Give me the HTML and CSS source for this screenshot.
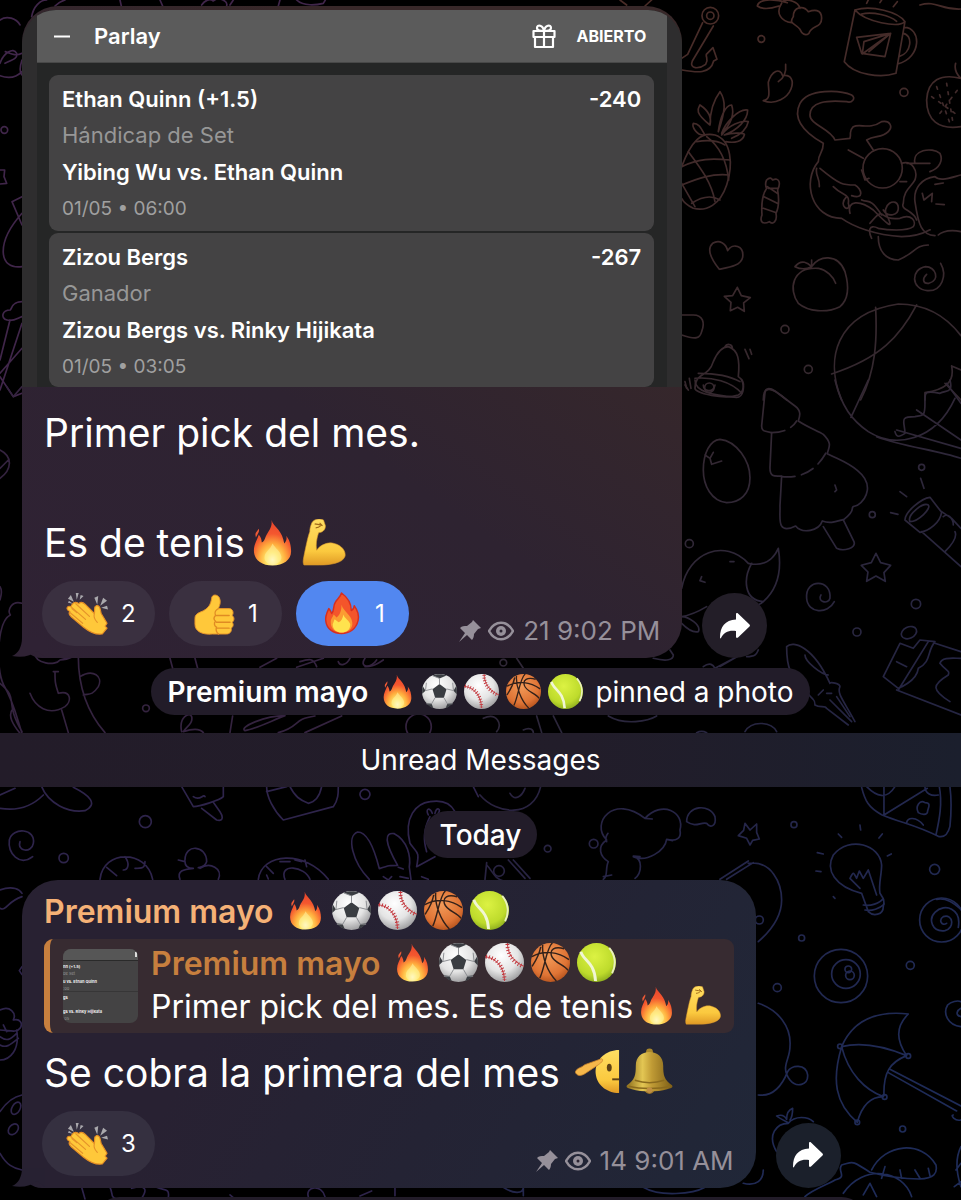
FILE: index.html
```html
<!DOCTYPE html>
<html lang="es">
<head>
    <meta charset="UTF-8">
    <meta name="viewport" content="width=device-width, initial-scale=1.0">
    <title>Premium mayo</title>
    <link rel="stylesheet" href="styles.css">
</head>
<body>
    <!-- shared emoji and icons -->
    <svg class="sprite" aria-hidden="true">
        <defs>
            <radialGradient id="gFire" cx="50%" cy="88%" r="85%">
                <stop offset="0" stop-color="#fffde6"/>
                <stop offset=".2" stop-color="#ffe667"/>
                <stop offset=".42" stop-color="#ffab3d"/>
                <stop offset=".68" stop-color="#f4572f"/>
                <stop offset="1" stop-color="#e8452c"/>
            </radialGradient>
            <radialGradient id="gWhite" cx="42%" cy="32%" r="70%">
                <stop offset="0" stop-color="#ffffff"/>
                <stop offset=".6" stop-color="#e4e4e4"/>
                <stop offset="1" stop-color="#9d9d9f"/>
            </radialGradient>
            <radialGradient id="gBasket" cx="45%" cy="35%" r="68%">
                <stop offset="0" stop-color="#f29a58"/>
                <stop offset=".7" stop-color="#df7435"/>
                <stop offset="1" stop-color="#b4521d"/>
            </radialGradient>
            <radialGradient id="gTennis" cx="45%" cy="35%" r="68%">
                <stop offset="0" stop-color="#dcf243"/>
                <stop offset=".7" stop-color="#bedb2c"/>
                <stop offset="1" stop-color="#8bab1e"/>
            </radialGradient>
            <linearGradient id="gSkin" x1="0" y1="0" x2="0" y2="1">
                <stop offset="0" stop-color="#ffdf63"/>
                <stop offset=".7" stop-color="#fbc93f"/>
                <stop offset="1" stop-color="#e09a25"/>
            </linearGradient>
            <linearGradient id="gBell" x1="0" x2="1">
                <stop offset="0" stop-color="#8d6d1c"/>
                <stop offset=".35" stop-color="#e3c653"/>
                <stop offset=".55" stop-color="#c09b35"/>
                <stop offset="1" stop-color="#7d5e16"/>
            </linearGradient>
        </defs>

        <symbol id="fire" viewBox="0 0 48 48">
            <path fill="url(#gFire)" d="M23 1c1 4 4 6 7 10 3 4 5 8 6 14 2-2 3-5 2-8 4 5 5 11 5 16 0 9-8 14.500-19 14.500S5 42 5 32c0-6 3-10 5-16 2 2 3 5 3 8 2-1 3-3 4-6 3-6 7-9 6-17z"/>
            <path fill="#ef5a35" d="M10 10c1 3-1 5-3 9 0-2-1-3 0-5z"/>
            <path fill="#fff3a0" opacity=".55" d="M24 25c3 5 8 8 9 13 1 5-4 8-9 8s-9-3-8-8c0-4 6-7 8-13z"/>
        </symbol>
        <symbol id="fire-flat" viewBox="0 0 44 44">
            <path fill="#f4552b" stroke="#d62f20" stroke-width="1.500" stroke-linejoin="round" d="M22 1c7 5 10 12 10 18 2-1 3-3 3-5 3 4 5 10 4 15-2 9-9 13.500-17 13.500S7 38 6 30c-1-5 1-9 3-13 1 1 2 3 3 5 3-3 1-8 4-12 2-3 5-5 6-9z"/>
            <path fill="#fb9b32" d="M22 13c2 7 10 10 11 18 1 7-5 10.500-11 10.500S11 38 11 31c0-4 2-5 3-8l3 3c4-3 5-8 5-13z"/>
            <path fill="#ffe34e" d="M24 23c1 4 6 6 7 10 0 6-4 8.500-9 8.500s-9-3-9-8.500c1-2 1-3 2-5l4 3c3-1 4-4 5-8z"/>
        </symbol>
        <symbol id="arm" viewBox="0 0 48 48">
            <path fill="url(#gSkin)" stroke="#d9982b" stroke-width=".6" d="M12 4c2-4 8-5 12-3l2 6c0 5-4 7-7 7-2 6-3 12-2 18 4-6 12-9 18-7 8 2 12 8 11 13-2 7-15 9-26 9H4c-1-2-1-4 0-9 2-10 4-20 6-25 0-4 1-6 2-9z"/>
            <path fill="none" stroke="#a06a1a" stroke-width="1.200" d="M15 5c3 1 5 0 8 2M16 9c2 0 4-1 5-2M20 4l3 3"/>
        </symbol>
        <symbol id="clap" viewBox="0 0 44 44">
            <path fill="#a9a8ac" d="M2 7l6 3-3-7zM10 1l1 7 2-7zM2 11l5 1-4-3zM29 6l3 7 1-9zM38 6l-3 8 7-5zM36 16l7 2-1-4zM15 3l-1 5 4-4z"/>
            <path fill="#ffc83a" stroke="#e58e24" stroke-width="1.200" stroke-linejoin="round" d="M1 17c0-2 2-3 4-2l1-2c2-3 5-3 7-1 2-2 5-1 7 1l9 9c1-4-1-7 2-8 4-1 4 4 5 8l6 10-2 3 2 2-5 6c-7 1-14-3-19-7L5 25c-2-2-2-4-1-5-2-1-3-2-3-3z"/>
            <path fill="none" stroke="#e5932a" stroke-width="1.200" stroke-linecap="round" d="M5 15l15 13M10 12l14 13M4 21l13 11M29 22c-1 4 0 6 3 9M6 17l5 4"/>
        </symbol>
        <symbol id="thumb" viewBox="0 0 44 44">
            <path fill="#ffc83a" stroke="#e5932a" stroke-width="1" stroke-linejoin="round" d="M2 27c0-5 5-6 9-8 5-3 7-6 8-12 0-5 6-5 8-1 2 5 0 8-1 11h11c4 0 5 5 3 7 3 2 2 6 0 7 2 2 1 5-1 6 1 3-1 6-5 6H20C9 44 2 40 2 33z"/>
            <path fill="none" stroke="#e08b23" stroke-width="1.400" stroke-linecap="round" d="M26 17c-4 2-4 4-3 7-2 2-2 4 0 6-2 2-1 5 1 6-1 3 0 5 2 7M24 24h13M24 31h14M25 37h12"/>
        </symbol>
        <symbol id="soccer" viewBox="0 0 40 40">
            <circle cx="20" cy="20" r="20" fill="url(#gWhite)"/>
            <path fill="#3a3d42" d="M20 11.500l8 6-3 9.500h-10l-3-9.500zM12 1.700c4-2 12-2 16 0L20 5zM1 14l3 5-3.800 3.500C0 19 .2 16 1 14zM39 14c1 2 1 6 .8 9L36 19zM5 33l6 1 2 5c-3-1-6-3-8-6zM35 33l-6 1-2 5c3-1 6-3 8-6z"/>
            <path fill="none" stroke="#8b8d91" stroke-width="1" d="M20 5v7M20 5l-8-3M12 17l-8 2M28 17l8 2M15 27l-4 7M25 27l4 7M4 19l1-9M36 19l-1-9M11 34H5M29 34h6"/>
        </symbol>
        <symbol id="baseball" viewBox="0 0 40 40">
            <circle cx="20" cy="20" r="20" fill="url(#gWhite)"/>
            <path fill="none" stroke="#c3363c" stroke-width="1" d="M0 14c11 1 20 11 20 25M23 0c0 11 6 19 17 24"/>
            <path fill="none" stroke="#c3363c" stroke-width="4" stroke-dasharray="1 2" d="M1 14c11 1 19 11 19 24M23 1c0 11 6 19 16 23"/>
        </symbol>
        <symbol id="basketball" viewBox="0 0 40 40">
            <circle cx="20" cy="20" r="20" fill="url(#gBasket)"/>
            <path fill="none" stroke="#32211a" stroke-width="1.500" d="M1 14c12-7 27-5 38 3M12 2c-1 12 5 28 14 37M22 0c-6 4-8 26-13 36M34 6c-10-3-15 1-13 7 2 7 13 9 17 15M1 24c4-6 7-10 9-20"/>
        </symbol>
        <symbol id="tennis" viewBox="0 0 40 40">
            <circle cx="20" cy="20" r="20" fill="url(#gTennis)"/>
            <path fill="none" stroke="#f1f6d4" stroke-width="3" d="M4 9c2 9 14 10 15 30"/>
            <path fill="none" stroke="#e9f0bd" stroke-width="2" d="M33 5c7 8 7 18 3 26"/>
        </symbol>
        <symbol id="salute" viewBox="0 0 48 48">
            <path fill="url(#gSkin)" d="M45 2v44c-13 0-24-9-24-22S32 2 45 2z"/>
            <ellipse cx="35" cy="20" rx="2.500" ry="4" fill="#5d4216"/>
            <path stroke="#5d4216" stroke-width="2" d="M38 32h7"/>
            <path fill="#f6b74a" stroke="#c9832b" stroke-width=".8" d="M1 23c2-3 6-3 9-6l17-6c3 1 0 4-3 6l-12 8c-4 3-8 4-10 2s-2-2-1-4z"/>
        </symbol>
        <symbol id="bell" viewBox="0 0 48 48">
            <circle cx="24" cy="4" r="3.500" fill="#a9872c"/>
            <circle cx="24" cy="42" r="5" fill="#9b7428"/>
            <path fill="url(#gBell)" d="M24 4c8 0 14 5 14 14 0 10 1 14 9 20 2 3-3 3-5 4-10 3-26 3-36 0-2-1-7-1-5-4 8-6 9-10 9-20 0-9 6-14 14-14z"/>
            <path fill="none" stroke="#8a6a1e" stroke-width="1.500" d="M9 33c9 3 21 3 30 0M3 39c12 3 30 3 42 0"/>
            <circle cx="24" cy="43" r="3" fill="#c08f44"/>
        </symbol>
        <symbol id="pin" viewBox="0 0 22 22">
            <path fill="currentColor" d="M14 0l8 8-3 1-4 5c0 3-1 5-2 6l-5-5-8 7 6-9-5-5c2-2 4-2 7-2l5-4z"/>
        </symbol>
        <symbol id="eye" viewBox="0 0 26 20">
            <path fill="none" stroke="currentColor" stroke-width="2.500" d="M1 10C7-1 19-1 25 10 19 21 7 21 1 10z"/>
            <circle cx="13" cy="10" r="5" fill="currentColor"/>
            <circle cx="13" cy="10" r="1.500" fill="#2b2331"/>
        </symbol>
        <symbol id="share" viewBox="0 0 30 26">
            <path fill="currentColor" d="M16 1.500c0-1.500 1-1.800 2-1l11.500 11c.6.700.6 1.300 0 2L18 24.500c-1 .8-2 .5-2-1V18C9 17 4 19 1 25c-.5.800-1 .5-1-.5C0 14 5 7 16 6.500z"/>
        </symbol>
        <symbol id="tail" viewBox="0 0 36 20">
            <path fill="currentColor" d="M10 0c0 9-4 16-10 18 10 2 19 0 25-5l8 6V0z"/>
        </symbol>
    </svg>

    <main class="chat">
        <svg class="wallpaper" viewBox="0 0 961 1200" preserveAspectRatio="xMidYMin slice" aria-hidden="true">
            <defs>
                <linearGradient id="wTop" gradientUnits="userSpaceOnUse" x1="500" y1="0" x2="900" y2="1200">
                    <stop offset="0" stop-color="#4a2c27"/>
                    <stop offset="1" stop-color="#34282f"/>
                </linearGradient>
                <linearGradient id="wMid" gradientUnits="userSpaceOnUse" x1="500" y1="0" x2="1100" y2="1000">
                    <stop offset="0" stop-color="#38292d"/>
                    <stop offset="1" stop-color="#252543"/>
                </linearGradient>
                <linearGradient id="wLow" gradientUnits="userSpaceOnUse" x1="100" y1="0" x2="1300" y2="1000">
                    <stop offset="0" stop-color="#29223f"/>
                    <stop offset="1" stop-color="#1e2b58"/>
                </linearGradient>
            </defs>
            <!-- top left -->
            <g transform="scale(.3333)" stroke="#40264a">
                <path d="M0 60c20-15 50-5 60 15M0 190c10-30 40-50 50-30 5 15-15 20-35 30M66 160c-20 10-35 0-50-5M66 215c-20 20-45 20-66 12M66 180c-10 30-5 40 0 45"/>
                <circle cx="13" cy="390" r="10"/>
                <path d="M0 510l14 0 -2 20 8 20-20 2M66 590l-30 15 30 70M66 640c-80 90-70 170 0 160M66 905c-30 0-30 20-35 25-25 0-30 25-10 30 20 5 30-5 45-10M30 960L0 1080M66 970L0 1170M66 1045L0 1120M0 1130l40 60 26-10"/>
                <path d="M95 50C100 20 120 0 140 0M165 18c10-10 20-15 30-18M360 0l4 18M480 0l8 18M605 15c10-15 25-20 35-12 15-15 45 0 40 15M700 0l-10 15M840 0l-5 18M890 0c20 20 60 15 80 10l6-10"/>
            </g>
            <!-- top right -->
            <g transform="translate(480) scale(.3333)" stroke="url(#wTop)">
                <path d="M420 0l20 15M495 18l20-18"/>
                <circle cx="691" cy="47" r="25"/><circle cx="691" cy="47" r="11"/>
                <path d="M668 68l-45 95-18 12M700 78l-63 105c-10 25 20 25 40 10 10-15 0-20 2-30l20-20 12 35-10 5c-10 40-50 35-95 27"/>
                <path d="M832 18c5-25 60-20 90-10M832 18c20 15 50 5 65 0M905 10c-20 30 0 55 30 58M905 5c20-10 50 0 55 20M940 50c0-30 30-35 45-15 15-5 40-10 40 20 0 30-30 20-38 45-12 10-22 0-27-12-15-20-35-15-20-38z"/>
                <circle cx="844" cy="117" r="10"/><circle cx="1272" cy="277" r="12"/><circle cx="915" cy="988" r="12"/><circle cx="985" cy="1108" r="12"/>
                <path d="M1125 30c50-15 130 5 150 35-20 20-120 0-150-35l-32 155c30 40 110 50 155 35l27-155M1145 42c35-8 85 5 105 22M1273 82c50 0 55 90-20 110M1270 100c30 5 25 60-13 70M1130 112l102-12-17 70-70-10zM1232 100l-85 62 5-37zM1232 100l-65 55M1160 10l5-10M1200 8l5-8M1240 20l12-15M1320 15c50-15 60 15 123 12"/>
                <path d="M850 302c25-5 15-30 15-55 10-35 35-45 43-20 25-5 35 15 25 40-10 25-45 50-83 35zM895 245c15-10 25-25 22-52"/>
                <path d="M1427 190c-5 20 5 35 16 45M1443 235c-60-15-100 5-103 65 0 60 35 90 103 80"/>
                <path stroke-dasharray="8 18" d="M1370 260l40 110M1400 250l20 125M1355 290l70 50M1380 340l60-80"/>
                <path d="M690 375c-50-40-35-50-30-60 30 20 35 40 30 60 0-50 15-80 30-100 20 30 15 60-5 120 5-40 20-80 40-80 10 30-5 60-30 85 10-30 50-75 78-70 0 30-30 60-70 75 30-10 65-5 60 0-5 20-30 25-55 20M670 405c-20 0-35-25-30-35 20 0 25 20 35 35M725 405c20-30 60-45 80-40-5 25-25 40-50 50M605 500c30-80 60-105 100-95 50 15 55 90 35 150-20 60-60 80-100 70-20-10-30-20-35-30"/>
                <path d="M605 500c50-25 90-25 145-20M605 555c50-20 90-35 142-30M635 610c30-20 60-25 85-10M625 455c30 40 70 90 80 150M680 410c40 30 60 70 66 130M650 425c30-5 60-5 85 10M605 550l40 70"/>
                <path d="M860 540c10-10 15-5 18 0 20-10 25 10 15 30 5 30 5 50-5 70 5 25-10 35-20 25-20 10-30 0-22-20-2-30 0-60 14-80-5-10-5-15 0-25zM852 590l40 20M862 560l30 20M850 625l35 12M865 565h28"/>
                <path d="M718 808c-20-25-40-60-20-78 20-12 40 0 45 22 15-25 50-15 45 20-5 25-40 30-70 36z"/>
                <path d="M772 862l12 25 27 6-20 16 2 25-20-12-22 10 2-25-20-18 25-2z"/>
                <path d="M605 945h35c30 0 35 25 25 50-5 20-15 25-60 10"/>
                <path d="M645 1165c0-50 40-30 55-80 15-35 30-45 45-45 30 10 35 40 30 90 30 20 10 50 0 55-40 15-130-5-130-20zM645 1135c50-5 110 10 140 45M655 1120c40 0 90 5 125 25M735 1040c5-10 20-8 22 2M795 1048l12 28M810 1048l5 15M628 1135l5 30M615 1145l5 20"/>
                <circle cx="688" cy="1163" r="14"/>
                <path d="M1030 430c-70-40-90-80-70-120 25-45 120-40 155-25 15 10 0 25-15 20-60-5-110 0-110 40 0 30 60 40 75 75l45-5c5-20-5-20 10-35 20-10 50 10 85-15 25-5 35 15 20 30-20 20-40 10-65 25l20 30M1030 430c0 30-15 30-15 55-50 60-20 170 70 170 35 25 100 50 180 55 60 0 90-25 85-20M1105 450l45 25"/>
                <circle cx="1208" cy="505" r="59"/>
                <path d="M1010 505c-5 20 10 30 8 55M1020 505c60 50 70 50 105 50 20 10 30 45-10 32M1060 560c30 30 50 20 45 50 10 30-35 10-5-20M1145 600c20 10 25-10 60 45M1110 640c-10-40 30-40 70-10 40 40 60 60 45 25-30-40 30-70 30-30 0 20-30 30-45 5M1170 670c50-60 20-5 90-15 35-15 50 10 40 25-20 15-80 10-105 5-30-15-30 10-20 30M1265 490c30-10 50 20 40 50-10 20-35 30-35 70-10 20 30 20 40 50M1305 490c-10-40 50-50 75-30 10 20 0 45-30 55M1280 490h70M1305 605c-5-40 20-70 60-75 15 15 40 5 78-5M1305 605c10 70 20 100 60 102M1375 705c0 0 20-20 68-10M1195 710c0 40 20 70 60 70 50-20 50-45 90-45M1327 580l5 20 25-20-2 25M1365 553l25-4M1368 612l25 2M1145 510l10 30 12-5M1260 545h20"/>
                <path d="M945 800c20-25 40-10 50 0-20 10-40 5-50 0zM995 800v-20M995 800c20-35 80-40 100 15 10 35 15 80-15 105-40 20-95 15-125-10-30-40-20-110 60-105 25 5 45 25 52 45"/>
                <path d="M1382 790c20 35 5 85-40 82-50-5-50-65-5-72 30 0 45 40 10 50-20 2-20-15-7-27"/>
                <path d="M1085 1200c-50-120-20-260 170-288 90 0 150 45 188 95M1187 922c5 100 0 190-45 278M1310 915c-50 95-110 160-255 207M1415 1098l28 12M1415 1098c10 50-20 70-80 80v22M1395 1150l48 50M850 1200c0-40 20-45 70 0"/>
            </g>
            <!-- middle left -->
            <g transform="translate(0 380) scale(.3333)" stroke="#34233f">
                <path d="M20 20l20 30 26-30M0 210c40 20 35 60 0 85M25 240l-25 25M0 620c10 15 0 35 0 40M66 670c-30-10-45 20-35 35-40 20-45 160-20 210 30 50 40 100 55 145M0 910c60 50 10 50 66 145M40 985c-20 20 0 50 20 75M105 820c0 30 60 40 75 20 35 0 45-20 60-15M180 840l50-15M235 830c0 100 30 170 80 228M160 875h15M165 875c0 30 0 35 10 65 40-10 40 25 20 40-50 30-90 0-105-40M240 890c40-25 70 0 55 30-20 30-30 20-45 25M185 990l20 68"/>
                <circle cx="438" cy="985" r="10"/><circle cx="1256" cy="1040" r="38"/>
                <path d="M510 835l8 30M585 835l8 30M780 862l50-27M890 862l80-27M900 845c30-10 40-10 50 15M1050 835c-10 20-30 25-35 10M1095 835c-20 30 20 30 35 5M1150 840c-30 20-40 20-55 20M545 1055c-10-45 25-60 30-45 5 20-15 30-25 45 30-10 50-10 60 3M690 1058l8-50M735 1052c-20-10 60-45 120-45-50 20-90 40-120 45zM835 1058c70-20 40-40 110-50M915 1058l110-50"/>
            </g>
            <!-- middle right -->
            <g transform="translate(480 380) scale(.3333)" stroke="url(#wMid)">
                <path d="M645 0c0 35 50 45 125 52 20 0 25-30 15-52M615 15l10 15M670 15c0 20 30 25 35 0"/>
                <path d="M670 270c0-50 20-90 50-92 50 5 90 65 90 115 0 50-30 75-70 75-45-5-70-50-70-98zM675 225l15 10 10-18M690 235l5 18 30-10"/>
                <path d="M875 158c-25-5-30-5-30-20l10-100c0-15 15-15 30-5l60 45c20 15 15 30 10 45 30 20 60 30 75 40 30 30 15 40 12 58 40 20 60 25 90 50 50 40 30 85 0 105-10 5-15 0-15 10 0 10-10 20-25 32-20 5-40 15-65 5-10 30-60 40-80 15-60 30-45-30-47-60l5-90c-20 0-35 5-35-25z"/>
                <path stroke-dasharray="40 20" d="M875 158c30 0 60-10 75-35M905 290c50 5 100-10 135-75"/>
                <path d="M1030 440l40 65c20 10 60 0 52-20l-32-65M1065 315l5 15-5 5"/>
                <circle cx="1325" cy="262" r="9"/><circle cx="1177" cy="404" r="9"/><circle cx="628" cy="491" r="12"/><circle cx="1308" cy="672" r="14"/><circle cx="1131" cy="756" r="12"/>
                <path d="M1065 0c20 80 50 120 100 155 80 50 200 30 260-100M1165 0l-52 112M1410 0c10 40-10 30-30 40-50-10-45 0-45 30 0 40-5 35-30 40-50 0-30 15-30 50-15 10-25 15-30-5M1310 90l133 90M1250 150l193 55M1190 170c80 30 180 40 253 65M1400 10l43 60"/>
                <path d="M1275 420c0-25 50-65 75-68l35 45c-5 30-35 55-65 60zM1290 425c-10-20 40-60 55-50 10 10-30 50-55 50zM1325 455l118 105M1385 395l30 20 28 30M1390 410c10-10 30 0 30 25M1425 455c10 20-20 50-30 60M1322 295l10 30M1260 335l20 15M1232 398l22 5"/>
                <path d="M1188 520l14 28 30 8-20 22 4 26-28-16-28 16 4-28-20-20 30-8z"/>
                <path d="M1063 665c-20 40-80 35-83-10-5-60 75-60 70 0-5 20-40 10-27-10"/>
                <path d="M605 625c20-110 130-150 200-75 45 10 75-10 90-45 10 60 0 120-45 160-60-5-60-70-35-115M850 665c-20 20-70 20-95 15M605 710c30-5 50-15 75-30M750 545h12M665 590l-5 12 15 5M605 710c20 0 60 25 50 45-20 5-40-15-50-25M520 835c40 10 60 5 60-10l-10-15M670 860c20-15 30-5 35 5l60-32M720 860l60-35M800 830c30 0 30-10 35-20"/>
                <path d="M920 800c20-20 80 0 130 110 0-5 30 0 30 10-10 20 10 40 45 105M920 800c0 80 20 90 60 135 20 30 25 20 25 40 15 10 30 0 35 10l65 50M975 825c0 20 50 60 70 60M1015 945l15-15M1040 940l15 0M1050 960l65 65M1070 950l40 60"/>
                <path d="M1260 790l-50 100 45 35c0 0 55-20 60-60 40-20 25-50 50-80l-45-5-20 25zM1250 845l30 15M1365 790l78 25M1250 930l193 75M1345 785l-90 145M1380 850c5-20 40-15 63-15M1380 850c20 25 30 20 25 35-50 30-50 45 5 80"/>
                <ellipse cx="1287" cy="758" rx="24" ry="17" transform="rotate(-25 1287 758)"/>
                <path d="M10 1015c40-20 60 20 40 40M170 1008l15 50M220 1008l25 50M385 1008c50 30 120 15 145 0M130 1050c20-10 30 0 30 8M650 1058c10-5 20-5 30 0M795 1055c20-35 80-30 95 0M110 835l20 30"/>
                <circle cx="70" cy="848" r="10"/>
            </g>
            <!-- bottom left -->
            <g transform="translate(0 780) scale(.3333)" stroke="#2e244b">
                <path d="M0 85c60 10 100-10 130-40M125 20c20 50 80 80 130 72 40-20 15-45-35-70M0 45l45-20M545 20l35 60c20 0 80-20 90-30V20M580 50c20 15 30-10 35 0M605 85l45 35c20 5 20-10 10-25l-20-28M800 20c0 30 20 70 50 100l150-40c15-20 15-40 15-60M800 35l60-15M870 20c15 30 30 40 55 50 25-5 35-25 40-50M1420 20l15 30"/>
                <circle cx="436" cy="125" r="18"/><circle cx="191" cy="234" r="14"/><circle cx="1095" cy="43" r="15"/>
                <path d="M98 230c-40 30-75-10-70-50 10-40 80-35 72 10-5 30-50 25-40-5"/>
                <path d="M300 298c10-90 140-90 158 0M320 262l30 25M375 230c15 20 10 40-5 40M435 245c0 20-10 20-30 20"/>
                <path d="M535 240l20 5M555 240c0-50 65-45 65 5-5 15-15 15-25 18M555 245c0 15 10 20 25 20M540 298c-10-25 10-30 40-33M600 265c30-20 70 0 55 33"/>
                <path d="M775 298c10-80 140-90 210 0M855 298c-20-50 60-40 75 0M800 260l20 20M840 245l30 0M885 240l20 5M915 240l5 20M800 285l5 12"/>
                <path d="M1108 298c-50-50-70-130-35-142 30 0 50 50 65 110 30-10 30-10 55-10M1193 256c-40-70-40-100-10-95 40 20 50 70 45 100l5 37M1150 290l15 10 10-10M1195 262l15 5M1200 290l25 5M1265 290l20 8M1230 190c-20-80 20-120 60-125 30-5 60 0 75 30M1230 190c20 30 30 20 20 70l55-30M1285 105c-10-20 5-25 12-5M1305 100c5-20 20-15 10 0M1290 110c-20 40-20 70-10 105"/>
                <path d="M0 330c40-15 60 0 66 10M0 385c20 10 20-20 66-35M66 560l-8 12 8 12M0 690c30-15 50 10 40 30 20-5 30 10 20 25-10 15-35 5-60 5M0 770c20 15 30 10 50-10M0 795c20 10 30 0 55-20M50 750c10 60-20 90-50 90M10 735l10 20M0 995c20-30 40-45 66-50M0 1120c20 35 40 45 66 50"/>
                <ellipse cx="48" cy="985" rx="12" ry="20" transform="rotate(30 48 985)"/><ellipse cx="40" cy="1048" rx="13" ry="18" transform="rotate(40 40 1048)"/>
                <path d="M245 1222l10 35M330 1222c10 20 0 30 20 35M395 1225c40-10 50 0 30 30M470 1222c20 10 40 0 35 30M690 1245l10 8M925 1250c-10-30 40-40 50 0M1080 1248l35-15M1185 1222v25"/>
            </g>
            <!-- bottom right -->
            <g transform="translate(480 780) scale(.3333)" stroke="url(#wLow)">
                <path d="M0 45c50 60 160 70 182-25M90 40c15 25 35 10 45-15M15 298l5-50M20 255c20 20 20 40 55 50M100 240l50 55M85 240l50 55"/>
                <circle cx="57" cy="273" r="16"/><circle cx="203" cy="206" r="10"/><circle cx="341" cy="191" r="13"/><circle cx="942" cy="134" r="9"/><circle cx="1364" cy="268" r="15"/><circle cx="965" cy="474" r="9"/><circle cx="1291" cy="556" r="12"/><circle cx="892" cy="623" r="12"/><circle cx="1268" cy="1047" r="9"/>
                <path d="M385 245c-25-15-35-45-5-65-50-50 20-140 115-65 50-55 120-20 105 35 5 25-10 35-40 28-5 35-60 70-100 52 30 5 25 50 5 65M380 185c-5-10 0-20 4-25M495 115l22 2M385 245c-10 20 0 45-15 53M370 290l25-5M460 228l20 2M560 178l18 4"/>
                <path d="M620 125c0-50 70-55 85-15 5 30-15 35-25 20-20-5-30 15-60-5z"/>
                <path d="M795 130l15 20 20-18 0 25 8 20-20 4-8 14-10-20-25-8 16-16z"/>
                <path d="M720 298l85-55M740 298l80-50M805 250c70-10 100 60 100 110 0 50-30 90-70 125"/>
                <circle cx="838" cy="420" r="12"/>
                <path d="M835 670c60 20 100 70 95 130 0 40-30 60 0 100 20 25 55 15 53-15-5-35-50-30-60-10-20 50-50 75-88 70"/>
                <path d="M1145 340c-80-20-110-70-85-115 50-60 140-30 145 30 0 30-10 60-5 85 10 15 15 20 10 40 0 25-30 30-45 15zM1150 375c20 5 50-5 60-20M1155 390c20 5 45-5 58-18M1140 325l-30-30c10-20 10-20 20 0l8-22 12 22 15-25 25 75M1140 135l2 15M1075 162l10 10M1207 162l-10 12M1012 218l18 4M1008 273l15 2M1222 228l12-6M1060 350l5 5"/>
                <circle cx="1385" cy="420" r="66"/>
                <path d="M1400 430c-15 10-25-10-10-20 30-10 35 35 5 42-40 5-50-35-30-55 30-30 80-10 70 45M1370 358c30-5 50 10 73 30"/>
                <circle cx="1083" cy="588" r="80"/><circle cx="1098" cy="582" r="43"/><circle cx="1105" cy="568" r="10"/><circle cx="1110" cy="586" r="13"/>
                <path d="M1145 22c10 40 20 60 60 82 60 25 100 30 170 65 20 5 30-10 35-30 5-50 5-80 0-118M1378 20c10 50 0 100-10 145M1212 20v85l130-80M1160 20c30 30 60 40 85 0M1280 130c0-20 30-20 50 5M1335 20c0 20 20 30 40 25"/>
                <path d="M1315 98c-10-20 5-40 20-30 20 0 10 15 8 25 0 15-20 10-28 5z"/>
                <path d="M1085 800c30-70 90-110 200-98-40 40-35 80-5 125M1085 800c60-15 130 0 195 27M1085 800c20 80 70 130 125 150M1280 827c-50 20-70 50-68 120M1210 950c-40 0-65 30-78 77M1085 800c-30 100-20 170 47 227M1230 868l213 110M1225 878l205 115M1420 1005c-10 0 5 20 23 15"/>
                <circle cx="1080" cy="799" r="7"/><circle cx="1285" cy="828" r="7"/><circle cx="1214" cy="951" r="7"/><circle cx="1132" cy="1027" r="7"/>
                <path d="M1443 740c-40-5-55-40-40-65 10-10 30-15 40-10M1443 710c-20-5-10-20 0-25"/>
                <path d="M890 1115c-30-50 0-85 35-85 20-25 60-20 75-5M925 1028c-20-10-30-15-35-20 15-5 25 0 30 10 0-20 10-30 18-33 0 15 0 25-8 35M1175 1170c40-80 150-90 193-15 5 25-5 40-50 42-60 0-110-10-148-20-60-40-50-30-85-22-15 20 20 35-20 45-15 10-70 30-90 50M1215 1160l-10 35M1260 1170l5 25M1305 1170l15 25M1345 1165l5 22M1090 1240c60-90 180-70 205 10M1150 1245l20-35 20 40M1443 1100c-20 40-10 90 0 120M1443 1150l-15 20M1443 1205l-20 15M790 1210c40 10 60-10 60-40M490 1222c50 30 150 20 185 0M70 1222c30 20 60 20 60 0v25"/>
            </g>
        </svg>

        <article class="message">
            <div class="bubble bubble-photo">
                <div class="photo">
                    <div class="slip">
                        <header class="slip-header">
                            <svg class="minus" viewBox="0 0 16 3" aria-hidden="true"><path stroke="#fff" stroke-width="2" d="M0 1.500h16"/></svg>
                            <span class="slip-title">Parlay</span>
                            <svg class="gift" viewBox="0 0 24 25" aria-hidden="true"><path fill="none" stroke="#fff" stroke-width="2.200" stroke-linejoin="round" d="M1.500 7h21v6h-21zM3 13h18v10H3zM12 7v16M12 7C9 7 5 7 5 4c0-4 6-3 7 3 1-6 7-7 7-3 0 3-4 3-7 3z"/></svg>
                            <span class="slip-status">ABIERTO</span>
                        </header>
                        <ul class="legs">
                            <li class="leg">
                                <div class="leg-top"><b>Ethan Quinn (+1.5)</b><b>-240</b></div>
                                <div class="leg-market">Hándicap de Set</div>
                                <b class="leg-match">Yibing Wu vs. Ethan Quinn</b>
                                <div class="leg-date">01/05 • 06:00</div>
                            </li>
                            <li class="leg">
                                <div class="leg-top"><b>Zizou Bergs</b><b>-267</b></div>
                                <div class="leg-market">Ganador</div>
                                <b class="leg-match">Zizou Bergs vs. Rinky Hijikata</b>
                                <div class="leg-date">01/05 • 03:05</div>
                            </li>
                        </ul>
                    </div>
                </div>
                <div class="content">
                    <p class="text">Primer pick del mes.<br><br>Es de tenis<span class="emojis"><svg role="img" aria-label="🔥"><use href="#fire"/></svg><svg role="img" aria-label="💪"><use href="#arm"/></svg></span></p>
                    <div class="message-footer">
                        <div class="reactions">
                            <button class="reaction" type="button"><svg role="img" aria-label="👏"><use href="#clap"/></svg>2</button>
                            <button class="reaction" type="button"><svg role="img" aria-label="👍"><use href="#thumb"/></svg>1</button>
                            <button class="reaction chosen" type="button"><svg role="img" aria-label="🔥"><use href="#fire-flat"/></svg>1</button>
                        </div>
                        <div class="meta"><svg class="pin"><use href="#pin"/></svg><svg class="eye"><use href="#eye"/></svg><span>21 9:02 PM</span></div>
                    </div>
                </div>
                <svg class="tail"><use href="#tail"/></svg>
            </div>
            <button class="share" type="button" aria-label="Share"><svg><use href="#share"/></svg></button>
        </article>

        <div class="pill pinned">
            <b>Premium mayo</b>
            <span class="emojis"><svg role="img" aria-label="🔥"><use href="#fire"/></svg><svg role="img" aria-label="⚽"><use href="#soccer"/></svg><svg role="img" aria-label="⚾"><use href="#baseball"/></svg><svg role="img" aria-label="🏀"><use href="#basketball"/></svg><svg role="img" aria-label="🎾"><use href="#tennis"/></svg></span>
            <span>pinned a photo</span>
        </div>

        <div class="unread">Unread Messages</div>

        <div class="pill date">Today</div>

        <article class="message">
            <div class="bubble bubble-reply">
                <div class="content">
                    <div class="author">Premium mayo <span class="emojis"><svg role="img" aria-label="🔥"><use href="#fire"/></svg><svg role="img" aria-label="⚽"><use href="#soccer"/></svg><svg role="img" aria-label="⚾"><use href="#baseball"/></svg><svg role="img" aria-label="🏀"><use href="#basketball"/></svg><svg role="img" aria-label="🎾"><use href="#tennis"/></svg></span></div>
                    <blockquote class="quote">
                        <svg class="thumbnail" viewBox="0 0 75 74" aria-hidden="true">
                            <rect width="75" height="74" fill="#444344"/>
                            <rect width="75" height="11" fill="#565656"/>
                            <path stroke="#2a2a2a" d="M0 11.500h75"/>
                            <path stroke="#373637" d="M0 42.500h75"/>
                            <path stroke="#ddd" stroke-width="2" d="M73 3v5"/>
                            <g class="thumbnail-text">
                                <text x="0" y="19">nn (+1.5)</text>
                                <text class="dim" x="0" y="26">de Set</text>
                                <text x="0" y="34">u vs. Ethan Quinn</text>
                                <text class="dim" x="0" y="41">:00</text>
                                <text x="0" y="50">gs</text>
                                <text x="0" y="64">gs vs. Rinky Hijikata</text>
                                <text class="dim" x="0" y="71">:05</text>
                            </g>
                        </svg>
                        <div class="quote-body">
                            <div class="quote-author">Premium mayo <span class="emojis"><svg role="img" aria-label="🔥"><use href="#fire"/></svg><svg role="img" aria-label="⚽"><use href="#soccer"/></svg><svg role="img" aria-label="⚾"><use href="#baseball"/></svg><svg role="img" aria-label="🏀"><use href="#basketball"/></svg><svg role="img" aria-label="🎾"><use href="#tennis"/></svg></span></div>
                            <div class="quote-text">Primer pick del mes. Es de tenis<span class="emojis"><svg role="img" aria-label="🔥"><use href="#fire"/></svg><svg role="img" aria-label="💪"><use href="#arm"/></svg></span></div>
                        </div>
                    </blockquote>
                    <p class="text">Se cobra la primera del mes <span class="emojis"><svg role="img" aria-label="🫡"><use href="#salute"/></svg><svg role="img" aria-label="🔔"><use href="#bell"/></svg></span></p>
                    <div class="message-footer">
                        <div class="reactions">
                            <button class="reaction" type="button"><svg role="img" aria-label="👏"><use href="#clap"/></svg>3</button>
                        </div>
                        <div class="meta"><svg class="pin"><use href="#pin"/></svg><svg class="eye"><use href="#eye"/></svg><span>14 9:01 AM</span></div>
                    </div>
                </div>
                <svg class="tail"><use href="#tail"/></svg>
            </div>
            <button class="share" type="button" aria-label="Share"><svg><use href="#share"/></svg></button>
        </article>

        <div class="pill next"></div>
    </main>
</body>
</html>
```
FILE: styles.css
```css
* {
    box-sizing: border-box;
}
body {
    margin: 0;
    background: #000;
    color: #fff;
    font-family: Inter, "Liberation Sans", sans-serif;
}
button {
    border: none;
    color: inherit;
    font: inherit;
    cursor: pointer;
}
p {
    margin: 0;
}
.sprite {
    position: absolute;
    width: 0;
    height: 0;
}
.chat {
    position: relative;
    height: 100vh;
    overflow: hidden;
    padding-top: 6px;
    display: flex;
    flex-direction: column;
    isolation: isolate;
}
.chat > * {
    flex-shrink: 0;
}
.wallpaper {
    position: absolute;
    top: 0;
    left: 0;
    width: 100%;
    height: 100%;
    z-index: -1;
    fill: none;
    stroke-width: 5;
    stroke-linecap: round;
    stroke-linejoin: round;
}

/* messages */
.message {
    display: flex;
    align-items: flex-end;
    gap: 20px;
    padding: 0 22px;
}
.bubble {
    position: relative;
    border-radius: 36px 36px 36px 20px;
}
.bubble-photo {
    width: 72%;
    padding-top: 4px;
    background: linear-gradient(215deg, #382829 25%, #2e2331 60%, #2f2234);
    color: #2f2234;
}
.bubble-reply {
    width: 80%;
    padding-top: 10px;
    background: linear-gradient(120deg, #282132 30%, #242334 60%, #202738);
    color: #272132;
}
.tail {
    position: absolute;
    left: -10px;
    bottom: 0;
    width: 36px;
    height: 20px;
}
.content {
    position: relative;
    z-index: 1;
    padding: 0 22px 12px;
    color: #fff;
}
.text {
    font-size: 39px;
    line-height: 55px;
}
.bubble-photo .text {
    padding-top: 18px;
}
.emojis {
    display: inline-flex;
    gap: 7px;
    margin: -4px 0 4px 4px;
    vertical-align: middle;
}
.emojis svg {
    width: 39px;
    height: 39px;
}
.text .emojis {
    gap: 4px;
}
.text .emojis svg {
    width: 47px;
    height: 47px;
}

/* bet slip photo */
.photo {
    padding: 0 15px;
    background: #2e2d2e;
    border-radius: 34px 34px 0 0;
    overflow: hidden;
    color: #fff;
}
.slip {
    background: #252626;
    font-size: 22px;
    line-height: 36px;
}
.slip-header {
    display: flex;
    align-items: center;
    height: 53px;
    padding: 0 21px 0 17px;
    background: #5b5b5b;
    border-bottom: 1px solid #484848;
}
.minus {
    width: 16px;
    height: 3px;
}
.slip-title {
    margin-left: 24px;
    font-weight: 600;
}
.gift {
    width: 24px;
    height: 25px;
    margin-left: auto;
}
.slip-status {
    margin-left: 20px;
    font-size: 16px;
    font-weight: 700;
}
.legs {
    list-style: none;
    margin: 0;
    padding: 12px 13px 0 12px;
    display: grid;
    gap: 2px;
}
.leg {
    padding: 6px 13px 4px;
    background: #444344;
    border-radius: 9px;
}
.leg:last-child {
    padding-bottom: 2px;
}
.leg b {
    font-weight: 600;
}
.leg-top {
    display: flex;
    justify-content: space-between;
}
.leg-market {
    color: #979797;
    line-height: 37px;
}
.leg-match {
    display: block;
    line-height: 37px;
}
.leg-date {
    color: #a0a0a0;
    font-size: 19px;
}

/* reactions and time */
.message-footer {
    display: flex;
    justify-content: space-between;
    align-items: flex-end;
    margin: 11px 0 0 -2px;
}
.reactions {
    display: flex;
    gap: 14px;
}
.reaction {
    display: flex;
    align-items: center;
    gap: 12px;
    width: 113px;
    height: 65px;
    padding: 0 0 0 24px;
    border-radius: 33px;
    background: #3a3040;
    font-size: 24px;
}
.bubble-reply .reaction {
    background: #353040;
}
.reaction.chosen {
    background: #5287f0;
}
.reaction svg {
    width: 43px;
    height: 43px;
}
.meta {
    display: flex;
    align-items: center;
    color: #96909a;
    font-size: 26px;
    line-height: 30px;
}
.pin {
    width: 22px;
    height: 22px;
    margin-right: 7px;
}
.eye {
    width: 26px;
    height: 20px;
    margin-right: 9px;
}
.share {
    flex-shrink: 0;
    display: grid;
    place-items: center;
    width: 65px;
    height: 65px;
    padding: 0;
    border-radius: 50%;
    background: #231e28;
}
.bubble-reply + .share {
    background: #1b202b;
}
.share svg {
    width: 30px;
    height: 26px;
}

/* service rows */
.pill {
    align-self: center;
    display: flex;
    align-items: center;
    height: 47px;
    padding: 0 16px;
    border-radius: 24px;
    background: #221c29;
    font-size: 28px;
}
.pinned {
    margin-top: 10px;
    gap: 12px;
}
.pinned b {
    font-weight: 600;
}
.pinned .emojis {
    margin: 0;
}
.pinned .emojis svg {
    width: 35px;
    height: 35px;
}
.unread {
    margin-top: 18px;
    background: linear-gradient(90deg, #231c29, #221d2a 60%, #1b1f2d);
    font-size: 28px;
    line-height: 54px;
    text-align: center;
}
.date {
    margin: 24px 0 22px;
    font-weight: 500;
}
.next {
    width: 80%;
    margin-top: 9px;
}

/* author and quoted message */
.author {
    color: #f5b176;
    font-size: 32px;
    font-weight: 600;
    line-height: 44px;
}
.quote {
    display: flex;
    align-items: center;
    margin: 5px 0 12px;
    padding: 4px 0 4px 13px;
    border-left: 6px solid #c77f3e;
    border-radius: 9px;
    background: #372b31;
    font-size: 32px;
    line-height: 42px;
}
.thumbnail {
    flex-shrink: 0;
    width: 75px;
    height: 74px;
    margin-right: 13px;
    border-radius: 8px;
}
.thumbnail-text {
    fill: #eee;
    font-size: 4px;
    font-weight: 700;
}
.thumbnail-text .dim {
    fill: #999;
    font-weight: 400;
}
.quote-author {
    color: #c77f3e;
    font-weight: 600;
}
.quote-text {
    white-space: nowrap;
}
```
